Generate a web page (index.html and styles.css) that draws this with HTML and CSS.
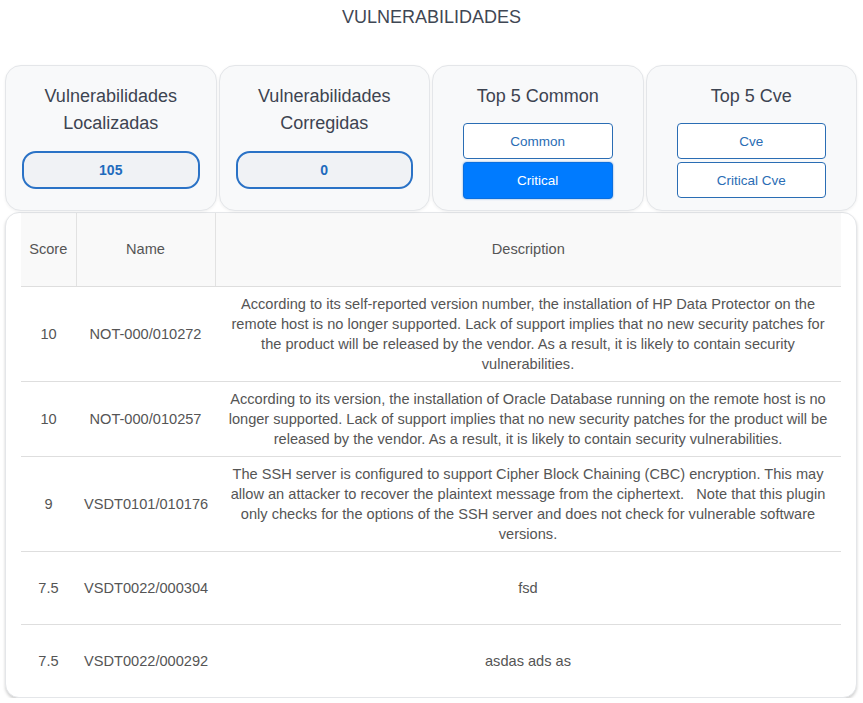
FILE: index.html
```html
<!DOCTYPE html>
<html lang="pt">
<head>
<meta charset="utf-8">
<title>Vulnerabilidades</title>
<link rel="stylesheet" href="styles.css">
</head>
<body>
<h1 class="page-title">VULNERABILIDADES</h1>

<div class="cards">
  <div class="card">
    <div class="card-title">Vulnerabilidades Localizadas</div>
    <div class="pill">105</div>
  </div>
  <div class="card">
    <div class="card-title">Vulnerabilidades Corregidas</div>
    <div class="pill">0</div>
  </div>
  <div class="card">
    <div class="card-title">Top 5 Common</div>
    <div class="btn-stack">
      <button class="btn">Common</button>
      <button class="btn btn-active">Critical</button>
    </div>
  </div>
  <div class="card">
    <div class="card-title">Top 5 Cve</div>
    <div class="btn-stack">
      <button class="btn">Cve</button>
      <button class="btn">Critical Cve</button>
    </div>
  </div>
</div>

<div class="table-card">
  <table class="vuln-table">
    <colgroup>
      <col class="col-score">
      <col class="col-name">
      <col>
    </colgroup>
    <thead>
      <tr>
        <th class="sep">Score</th>
        <th class="sep">Name</th>
        <th>Description</th>
      </tr>
    </thead>
    <tbody>
      <tr>
        <td>10</td>
        <td>NOT-000/010272</td>
        <td>According to its self-reported version number, the installation of HP Data Protector on the remote host is no longer supported. Lack of support implies that no new security patches for the product will be released by the vendor. As a result, it is likely to contain security vulnerabilities.</td>
      </tr>
      <tr>
        <td>10</td>
        <td>NOT-000/010257</td>
        <td>According to its version, the installation of Oracle Database running on the remote host is no longer supported. Lack of support implies that no new security patches for the product will be released by the vendor. As a result, it is likely to contain security vulnerabilities.</td>
      </tr>
      <tr>
        <td>9</td>
        <td>VSDT0101/010176</td>
        <td>The SSH server is configured to support Cipher Block Chaining (CBC) encryption. This may allow an attacker to recover the plaintext message from the ciphertext. &nbsp; Note that this plugin only checks for the options of the SSH server and does not check for vulnerable software versions.</td>
      </tr>
      <tr>
        <td>7.5</td>
        <td>VSDT0022/000304</td>
        <td>fsd</td>
      </tr>
      <tr>
        <td>7.5</td>
        <td>VSDT0022/000292</td>
        <td>asdas ads as</td>
      </tr>
    </tbody>
  </table>
</div>
</body>
</html>
```

FILE: styles.css
```css
* { box-sizing: border-box; }

html, body {
  margin: 0;
  padding: 0;
  background: #ffffff;
  font-family: "Liberation Sans", Arial, sans-serif;
  color: #555555;
}

.page-title {
  margin: 6px 0 37px;
  font-size: 18px;
  line-height: 22px;
  font-weight: normal;
  text-align: center;
  color: #3f4754;
}

.cards {
  display: grid;
  grid-template-columns: repeat(4, 1fr);
  gap: 2px;
  padding: 0 6px 0 5px;
}

.card {
  background: #f8f9fa;
  border: 1px solid #e4e6e9;
  border-radius: 16px;
  padding: 17px 16px 10px;
  box-shadow: 0 1px 3px rgba(0, 0, 0, 0.06);
  text-align: center;
}

.card-title {
  font-size: 18px;
  line-height: 27px;
  color: #3d4451;
  margin-bottom: 14px;
}

.pill {
  height: 38px;
  margin-bottom: 11px;
  border: 2px solid #2a72c6;
  border-radius: 14px;
  background: #f0f2f5;
  color: #1f6bbd;
  font-size: 14px;
  font-weight: bold;
  line-height: 34px;
  text-align: center;
}

.btn-stack {
  display: flex;
  flex-direction: column;
  gap: 3px;
  margin-top: -1px;
  padding: 0 14px;
}

.btn {
  height: 36px;
  border: 1px solid #2a6db4;
  border-radius: 4px;
  background: #ffffff;
  color: #2a6db4;
  font-family: "Liberation Sans", Arial, sans-serif;
  font-size: 13.5px;
  padding: 0;
  cursor: pointer;
}

.btn-active {
  height: 37px;
  background: #007bff;
  border-color: #0a6fe0;
  color: #ffffff;
  box-shadow: 0 0 2px rgba(0, 90, 200, 0.6);
}

.table-card {
  margin: 1px 6px 0 5px;
  background: #ffffff;
  border: 1px solid #e4e6e9;
  border-radius: 14px;
  padding: 0 15px;
  box-shadow: 0 2px 3px rgba(0, 0, 0, 0.18);
}

.vuln-table {
  width: 100%;
  border-collapse: collapse;
  table-layout: fixed;
  font-size: 14.6px;
  line-height: 20px;
  color: #555555;
}

.col-score { width: 55px; }
.col-name { width: 139px; }

.vuln-table tr { height: 73px; }

.vuln-table th {
  font-weight: normal;
  background: #f9f9f9;
  padding: 7px 8px;
  border-bottom: 1px solid #dedede;
  color: #555555;
}

.vuln-table th.sep {
  border-right: 1px solid #e2e2e2;
}

.vuln-table td {
  padding: 7px 8px;
  text-align: center;
  vertical-align: middle;
  border-bottom: 1px solid #dedede;
}

.vuln-table tbody tr:last-child td {
  border-bottom: none;
}
```
